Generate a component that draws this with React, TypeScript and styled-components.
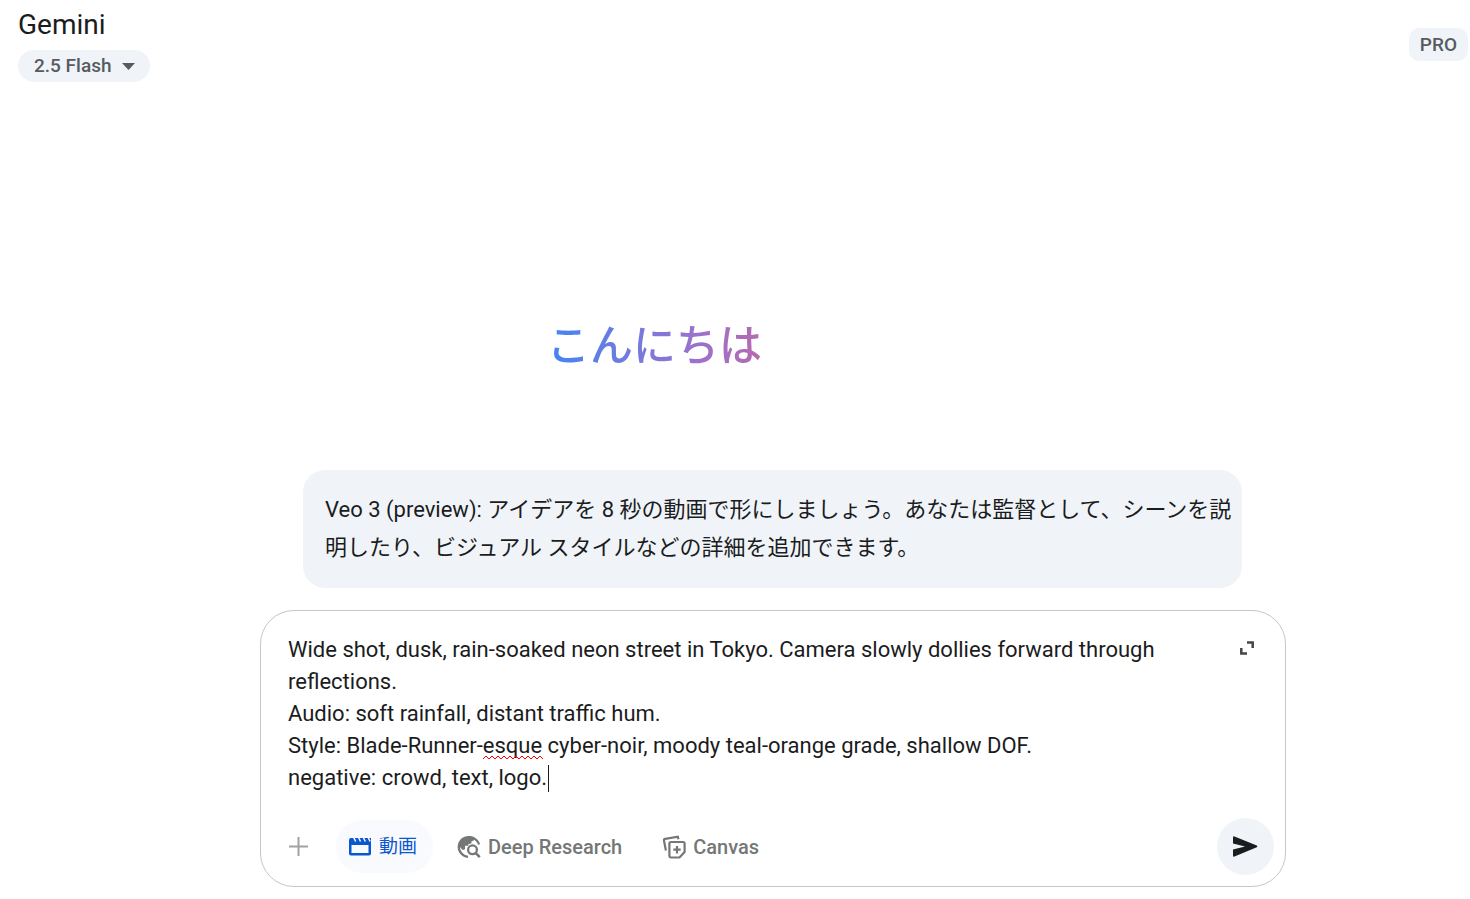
import React, { useState } from "react";
import styled, { createGlobalStyle } from "styled-components";

const GlobalStyle = createGlobalStyle`
  *, *::before, *::after { box-sizing: border-box; }
  body {
    margin: 0;
    background: #fff;
    color: #1b1c1d;
    font-family: Roboto, "Noto Sans CJK JP", sans-serif;
    overflow-x: hidden;
  }
  button, textarea { font: inherit; color: inherit; }
  button { border: 0; background: none; padding: 0; cursor: pointer; }
`;

const Page = styled.div`
  display: flex;
  flex-direction: column;
  min-height: 100vh;
`;

const TopBar = styled.header`
  display: flex;
  justify-content: space-between;
  align-items: flex-start;
  padding: 8px 2px 0 18px;
`;

const Brand = styled.div`
  display: flex;
  flex-direction: column;
  align-items: flex-start;
  gap: 8px;
`;

const BrandName = styled.span`
  font-size: 28px;
  line-height: 34px;
`;

const ModelButton = styled.button`
  display: flex;
  align-items: center;
  gap: 11px;
  height: 32px;
  padding: 0 15px 0 16px;
  border-radius: 16px;
  background: #f0f4f9;
  color: #575b5f;
  font-size: 19px;
  font-weight: 500;
  line-height: 32px;
`;

const PlanBadge = styled.button`
  height: 33px;
  margin-top: 20px;
  padding: 0 11px;
  border-radius: 10px;
  background: #f0f4f9;
  color: #575b5f;
  font-size: 19px;
  font-weight: 500;
  line-height: 33px;
`;

const Main = styled.main`
  display: flex;
  flex: 1;
  flex-direction: column;
  padding: 0 184px 12px 260px;
`;

const Greeting = styled.h1`
  align-self: flex-start;
  margin: 228px 0 0 287px;
  font-family: "Noto Sans CJK JP", sans-serif;
  font-size: 43px;
  line-height: 64px;
  font-weight: 500;
  color: transparent;
  background: linear-gradient(90deg, #4285f4 0%, #9b72cb 70%, #b56ab0 100%);
  background-clip: text;
`;

const Hint = styled.p`
  margin: 96px 44px 22px 43px;
  padding: 21px 8px 21px 22px;
  border-radius: 22px;
  background: #f0f4f9;
  font-size: 22px;
  line-height: 38px;
`;

const Composer = styled.form`
  display: flex;
  flex-direction: column;
  gap: 24px;
  padding: 23px 11px 11px 27px;
  border: 1px solid #c4c7c5;
  border-radius: 34px;
`;

const PromptRow = styled.div`
  display: flex;
  align-items: flex-start;
  justify-content: space-between;
  gap: 24px;
`;

const PromptField = styled.div`
  position: relative;
  flex: 1;
  max-width: 904px;
`;

const Prompt = styled.textarea`
  display: block;
  width: 100%;
  padding: 0;
  border: 0;
  outline: 0;
  resize: none;
  overflow: hidden;
  background: none;
  caret-color: transparent;
  font-size: 22px;
  line-height: 32px;
`;

const SpellingMark = styled.svg`
  position: absolute;
  left: 195px;
  top: 121px;
`;

const Caret = styled.span`
  position: absolute;
  left: 260px;
  top: 131px;
  width: 1px;
  height: 27px;
  background: #1b1c1d;
`;

const ExpandButton = styled.button`
  display: flex;
  margin: 7px 20px 0 0;
`;

const Toolbar = styled.div`
  display: flex;
  align-items: center;
  justify-content: space-between;
`;

const Tools = styled.div`
  display: flex;
  align-items: center;
`;

const AddButton = styled.button`
  display: flex;
  margin-right: 27px;
`;

const ToolButton = styled.button<{ $active?: boolean }>`
  display: flex;
  align-items: center;
  gap: 7px;
  height: 53px;
  padding: ${(p) => (p.$active ? "0 16px 0 12px" : "0 16px 0 24px")};
  border-radius: 27px;
  background: ${(p) => (p.$active ? "#f8fafd" : "transparent")};
  color: ${(p) => (p.$active ? "#0b57d0" : "#747775")};
  font-size: ${(p) => (p.$active ? 19 : 20)}px;
  font-weight: ${(p) => (p.$active ? 400 : 500)};
  line-height: 28px;
  white-space: nowrap;
`;

const SendButton = styled.button`
  display: flex;
  align-items: center;
  justify-content: center;
  width: 57px;
  height: 57px;
  border-radius: 50%;
  background: #f0f4f9;
`;

const initialPrompt = `Wide shot, dusk, rain-soaked neon street in Tokyo. Camera slowly dollies forward through reflections.
Audio: soft rainfall, distant traffic hum.
Style: Blade-Runner-esque cyber-noir, moody teal-orange grade, shallow DOF.
negative: crowd, text, logo.`;

const squiggle =
  "M0 4" + Array.from({ length: 10 }, () => "l3 -3l3 3").join("");

const ClapperIcon = () => (
  <svg width="24" height="24" viewBox="0 0 24 24" aria-hidden="true">
    <path d="M3 3h20v15.500a2 2 0 0 1-2 2H3a2 2 0 0 1-2-2V5a2 2 0 0 1 2-2zm.5 7v8h17v-8z" fill="currentColor" fillRule="evenodd" />
    <path d="M5.500 2l2.200 4.500M10.300 2l2.200 4.500M15.100 2l2.200 4.500M19.900 2l2.200 4.500" stroke="#f8fafd" strokeWidth="1.500" />
  </svg>
);

const ResearchIcon = () => (
  <svg width="24" height="24" viewBox="0 0 24 24" fill="none" aria-hidden="true">
    <path d="M11 21.800A10 10 0 0 1 1.800 11" stroke="currentColor" strokeWidth="2.200" />
    <path d="M16 3a10 10 0 0 1 6 6.500" stroke="currentColor" strokeWidth="2.200" />
    <path d="M.7 11.500C.7 5.800 5.500 1 12 1c2 0 4 .5 5.600 1.400L16.800 5.500l-2.300.8v2l-3.200 1v1.500H8v3.400L5.600 15 1.800 10.800z" fill="currentColor" />
    <circle cx="15.500" cy="14.800" r="4.400" stroke="currentColor" strokeWidth="2.300" />
    <path d="M18.500 17.800l4.300 4.300" stroke="currentColor" strokeWidth="2.500" />
  </svg>
);

const CanvasIcon = () => (
  <svg width="24" height="24" viewBox="0 0 24 24" fill="none" stroke="currentColor" strokeWidth="2.200" aria-hidden="true">
    <path d="M3.900 15.500 2 5.600a1.500 1.500 0 0 1 1.200-1.700L15.800 1.700l.6 2.500" />
    <path d="M9 7h12a1.600 1.600 0 0 1 1.600 1.600V17L17.500 22.500H9A1.600 1.600 0 0 1 7.400 21V8.600A1.600 1.600 0 0 1 9 7z" />
    <path d="M15 11v7.400M11.300 14.700h7.400" />
  </svg>
);

export default function App() {
  const [prompt, setPrompt] = useState(initialPrompt);
  const untouched = prompt === initialPrompt;

  return (
    <Page>
      <GlobalStyle />
      <TopBar>
        <Brand>
          <BrandName>Gemini</BrandName>
          <ModelButton type="button">
            2.5 Flash
            <svg width="13" height="7" viewBox="0 0 13 7" fill="currentColor" aria-hidden="true">
              <path d="M0 0h13L6.500 7z" />
            </svg>
          </ModelButton>
        </Brand>
        <PlanBadge type="button">PRO</PlanBadge>
      </TopBar>
      <Main>
        <Greeting>こんにちは</Greeting>
        <Hint>
          Veo 3 (preview): アイデアを 8 秒の動画で形にしましょう。あなたは監督として、シーンを説明したり、ビジュアル スタイルなどの詳細を追加できます。
        </Hint>
        <Composer onSubmit={(e) => e.preventDefault()}>
          <PromptRow>
            <PromptField>
              <Prompt
                aria-label="プロンプト"
                rows={5}
                spellCheck={false}
                value={prompt}
                onChange={(e) => setPrompt(e.target.value)}
              />
              {untouched && (
                <>
                  <SpellingMark width="60" height="5" viewBox="0 0 60 5" fill="none" stroke="#f00" aria-hidden="true">
                    <path d={squiggle} />
                  </SpellingMark>
                  <Caret />
                </>
              )}
            </PromptField>
            <ExpandButton type="button" aria-label="全画面">
              <svg width="14" height="14" viewBox="0 0 14 14" fill="none" stroke="#444746" strokeWidth="2.500" aria-hidden="true">
                <path d="M7 1.500h5.700v5.500M1.300 7v5.500H7" />
              </svg>
            </ExpandButton>
          </PromptRow>
          <Toolbar>
            <Tools>
              <AddButton type="button" aria-label="追加">
                <svg width="21" height="21" viewBox="0 0 21 21" stroke="#a0a3a2" strokeWidth="2" aria-hidden="true">
                  <path d="M10.500 1v19M1 10.500h19" />
                </svg>
              </AddButton>
              <ToolButton type="button" $active>
                <ClapperIcon />
                動画
              </ToolButton>
              <ToolButton type="button">
                <ResearchIcon />
                Deep Research
              </ToolButton>
              <ToolButton type="button">
                <CanvasIcon />
                Canvas
              </ToolButton>
            </Tools>
            <SendButton type="submit" aria-label="送信">
              <svg width="25" height="21" viewBox="0 0 25 21" fill="#1b1c1d" aria-hidden="true">
                <path d="M0 1.500Q0 0 1.500.4L23.800 9.500Q25 10.500 23.800 11.300L1.500 20.600Q0 21 0 19.500V13.500L12 10.500 0 7.500z" />
              </svg>
            </SendButton>
          </Toolbar>
        </Composer>
      </Main>
    </Page>
  );
}
